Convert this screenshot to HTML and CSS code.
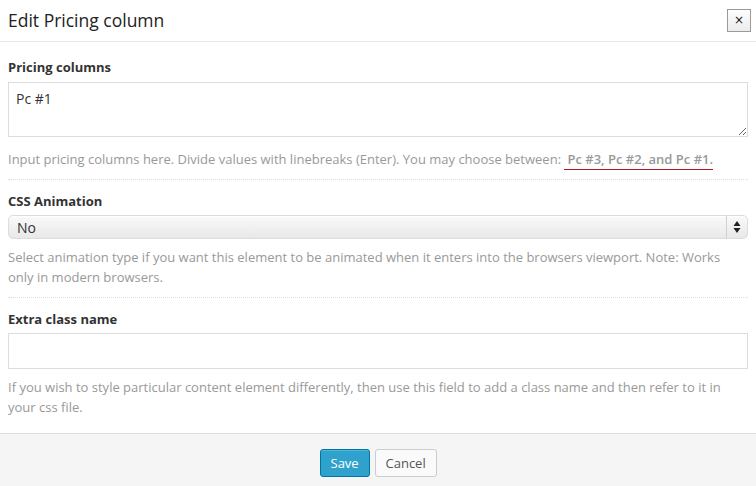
FILE: index.html
```html
<!DOCTYPE html>
<html>
<head>
<meta charset="utf-8">
<link rel="stylesheet" href="styles.css">
</head>
<body>
<div class="modal">
  <div class="header">
    <h1 class="title">Edit Pricing column</h1>
    <button class="close">×</button>
  </div>
  <div class="body">
    <div class="field first">
      <div class="label">Pricing columns</div>
      <textarea class="textarea">Pc #1</textarea>
      <div class="help">Input pricing columns here. Divide values with linebreaks (Enter). You may choose between: <span class="values">Pc #3, Pc #2, and Pc #1.</span></div>
    </div>
    <div class="field">
      <div class="label">CSS Animation</div>
      <div class="select"><span class="select-text">No</span><span class="select-arrows"><svg width="8" height="14" viewBox="0 0 8 14"><path d="M4 1 L7.5 6 L0.5 6 Z M0.5 8 L7.5 8 L4 13 Z" fill="#222"/></svg></span></div>
      <div class="help">Select animation type if you want this element to be animated when it enters into the browsers viewport. Note: Works only in modern browsers.</div>
    </div>
    <div class="field last">
      <div class="label">Extra class name</div>
      <input class="input" type="text">
      <div class="help">If you wish to style particular content element differently, then use this field to add a class name and then refer to it in your css file.</div>
    </div>
  </div>
  <div class="footer">
    <button class="btn btn-primary">Save</button>
    <button class="btn btn-default">Cancel</button>
  </div>
</div>
</body>
</html>
```
FILE: styles.css
```css
html, body {
  margin: 0;
  padding: 0;
  background: #fff;
}
body {
  font-family: "Open Sans", "Liberation Sans", sans-serif;
  color: #333;
  width: 756px;
  height: 486px;
  overflow: hidden;
}
.modal {
  display: flex;
  flex-direction: column;
  height: 486px;
}
.header {
  height: 42px;
  border-bottom: 1px solid #e8e8e8;
  display: flex;
  align-items: center;
  justify-content: space-between;
  padding: 0 5px 0 8px;
  box-sizing: border-box;
}
.title {
  margin: 0;
  font-size: 17.5px;
  font-weight: 400;
  color: #222;
  margin-top: -2px;
}
.close {
  width: 24px;
  height: 23px;
  border: 1px solid #9a9a9a;
  background: linear-gradient(#fdfdfd, #ececec);
  font-family: "DejaVu Sans", sans-serif;
  font-size: 12px;
  line-height: 1;
  color: #222;
  padding: 0;
  margin-top: -1px;
}
.body {
  flex: 1;
  padding: 0 8px;
}
.field {
  padding-top: 12px;
  padding-bottom: 10px;
  border-bottom: 1px dotted #ddd;
}
.field.first {
  padding-top: 16px;
}
.field.last {
  border-bottom: none;
}
.label {
  font-size: 13px;
  font-weight: 700;
  color: #333;
  line-height: 18px;
  margin-bottom: 5px;
}
.field.first .label {
  margin-bottom: 6px;
}
.textarea {
  display: block;
  width: 740px;
  height: 55px;
  box-sizing: border-box;
  border: 1px solid #ddd;
  font-family: "Open Sans", "Liberation Sans", sans-serif;
  font-size: 14px;
  color: #333;
  padding: 6px 7px;
  margin: 0;
  resize: vertical;
}
.help {
  font-size: 13px;
  color: #999;
  line-height: 20px;
  margin-top: 12px;
}
.values {
  font-weight: 600;
  border-bottom: 1px solid #b4151a;
  padding: 0 0 1px 3px;
}
.select {
  height: 24px;
  box-sizing: border-box;
  border: 1px solid #dcdcdc;
  border-radius: 5px;
  background: linear-gradient(#fafafa, #e8e8e8);
  display: flex;
  align-items: center;
  justify-content: space-between;
  font-size: 14px;
  color: #333;
  box-shadow: inset 0 1px 0 #fff;
}
.select-text {
  padding-left: 8px;
}
.select-arrows {
  width: 20px;
  height: 100%;
  border-left: 1px solid #d0d0d0;
  display: flex;
  align-items: center;
  justify-content: center;
}
.select + .help {
  margin-top: 8px;
}
.input {
  display: block;
  width: 740px;
  height: 36px;
  box-sizing: border-box;
  border: 1px solid #ddd;
  margin: 0;
  padding: 0 8px;
}
.input + .help {
  margin-top: 8px;
}
.footer {
  height: 53px;
  border-top: 1px solid #ddd;
  background: #f5f5f5;
  display: flex;
  justify-content: center;
  align-items: center;
  gap: 5px;
  padding-top: 5px;
  box-sizing: border-box;
}
.btn {
  height: 28px;
  box-sizing: border-box;
  border-radius: 3px;
  font-family: "Open Sans", "Liberation Sans", sans-serif;
  font-size: 13px;
  padding: 0 10px;
}
.btn-primary {
  width: 50px;
  background: #2ea2cc;
  border: 1px solid #0074a2;
  color: #fff;
  box-shadow: inset 0 1px 0 rgba(120, 200, 230, 0.5);
}
.btn-default {
  width: 62px;
  background: #fafafa;
  border: 1px solid #ccc;
  color: #555;
}
```
